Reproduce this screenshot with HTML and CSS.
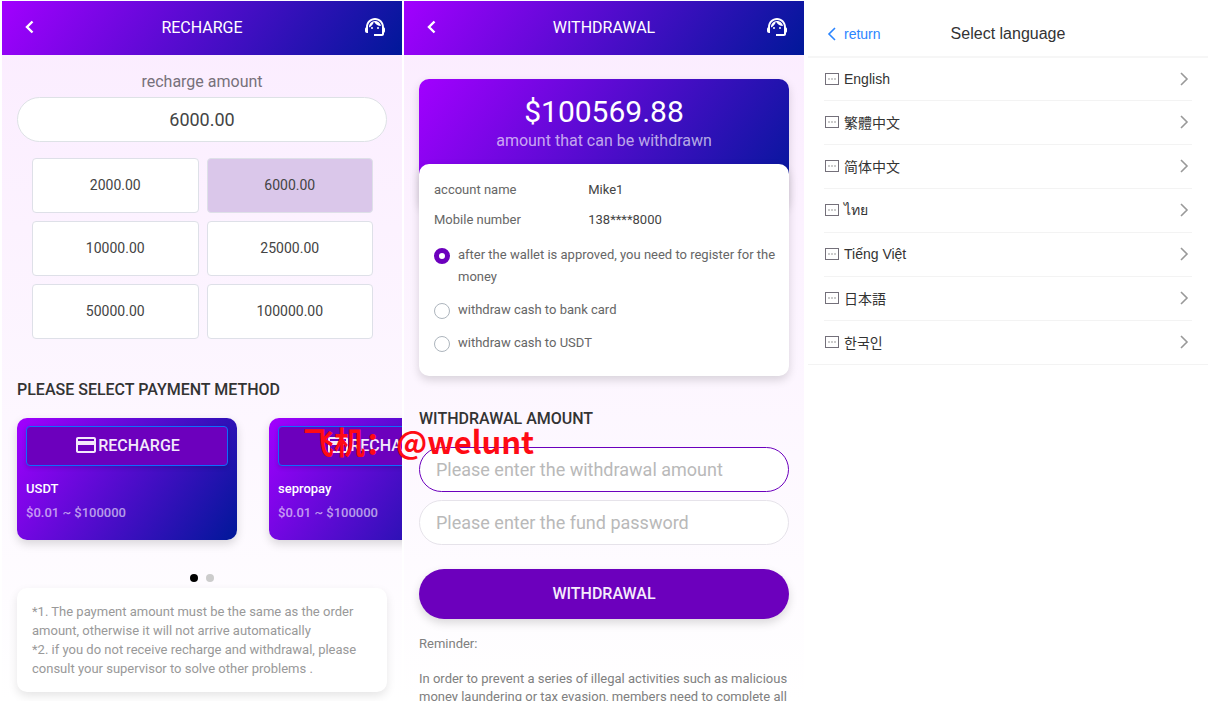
FILE: index.html
```
<!DOCTYPE html>
<html lang="en">
    <head>
        <meta charset="UTF-8">
        <title>Wallet</title>
        <meta name="viewport" content="width=device-width,initial-scale=1.0">
        <link rel="stylesheet" href="styles.css">
    </head>
    <body>
        <svg class="defs" aria-hidden="true">
            <symbol id="back" viewBox="0 0 24 24">
                <path d="M15.500 6.500 10 12l5.500 5.500" fill="none" stroke="currentColor" stroke-width="2.400"/>
            </symbol>
            <symbol id="agent" viewBox="0 0 24 24">
                <path d="M21 12.220C21 6.730 16.740 3 12 3c-4.690 0-9 3.650-9 9.280-.6.340-1 .980-1 1.720v2c0 1.100.900 2 2 2h1v-6.100c0-3.870 3.130-7 7-7s7 3.130 7 7V19h-8v2h8c1.100 0 2-.900 2-2v-1.220c.590-.310 1-.920 1-1.640v-2.300c0-.700-.410-1.310-1-1.620z"/>
                <circle cx="9" cy="13" r="1"/>
                <circle cx="15" cy="13" r="1"/>
                <path d="M18 11.030C17.520 8.180 15.040 6 12.050 6c-3.030 0-6.290 2.510-6.030 6.450 2.470-1.010 4.330-3.210 4.860-5.890 1.310 2.630 4 4.440 7.120 4.470z"/>
            </symbol>
            <symbol id="card" viewBox="0 0 24 24">
                <path d="M20 4H4c-1.110 0-2 .890-2 2v12c0 1.110.890 2 2 2h16c1.110 0 2-.890 2-2V6c0-1.110-.890-2-2-2zm0 14H4v-6h16v6zm0-10H4V6h16v2z"/>
            </symbol>
            <symbol id="lang" viewBox="0 0 16 14">
                <rect x="1.500" y="1.500" width="13" height="11" fill="none" stroke="#74707a"/>
                <path d="M4 7h2M7 7h2M10 7h2" stroke="#999" stroke-width="1.200"/>
            </symbol>
            <symbol id="next" viewBox="0 0 10 14">
                <path d="M2 1l6 6-6 6" fill="none" stroke="currentColor" stroke-width="1.600"/>
            </symbol>
        </svg>

        <section class="panel wallet">
            <header class="bar">
                <button class="icon-btn" aria-label="back"><svg><use href="#back"/></svg></button>
                <h1>RECHARGE</h1>
                <button class="icon-btn" aria-label="service"><svg><use href="#agent"/></svg></button>
            </header>
            <div class="recharge">
                <label class="amount-label" for="amount">recharge amount</label>
                <input class="pill amount" id="amount" type="text" value="6000.00">
                <div class="choices">
                    <button>2000.00</button>
                    <button class="active">6000.00</button>
                    <button>10000.00</button>
                    <button>25000.00</button>
                    <button>50000.00</button>
                    <button>100000.00</button>
                </div>
                <h2>PLEASE SELECT PAYMENT METHOD</h2>
                <div class="methods">
                    <div class="method">
                        <button><svg><use href="#card"/></svg>RECHARGE</button>
                        <p class="name">USDT</p>
                        <p class="range">$0.01 ~ $100000</p>
                    </div>
                    <div class="method">
                        <button><svg><use href="#card"/></svg>RECHARGE</button>
                        <p class="name">sepropay</p>
                        <p class="range">$0.01 ~ $100000</p>
                    </div>
                </div>
                <div class="dots"><span class="on"></span><span></span></div>
                <div class="note">
                    <p>*1. The payment amount must be the same as the order amount, otherwise it will not arrive automatically</p>
                    <p>*2. if you do not receive recharge and withdrawal, please consult your supervisor to solve other problems .</p>
                </div>
            </div>
        </section>

        <section class="panel wallet">
            <header class="bar">
                <button class="icon-btn" aria-label="back"><svg><use href="#back"/></svg></button>
                <h1>WITHDRAWAL</h1>
                <button class="icon-btn" aria-label="service"><svg><use href="#agent"/></svg></button>
            </header>
            <form class="withdraw">
                <div class="balance">
                    <p class="total">$100569.88</p>
                    <p class="caption">amount that can be withdrawn</p>
                </div>
                <div class="account">
                    <dl>
                        <dt>account name</dt><dd>Mike1</dd>
                        <dt>Mobile number</dt><dd>138****8000</dd>
                    </dl>
                    <label class="way"><input type="radio" name="way" checked><span>after the wallet is approved, you need to register for the money</span></label>
                    <label class="way"><input type="radio" name="way"><span>withdraw cash to bank card</span></label>
                    <label class="way"><input type="radio" name="way"><span>withdraw cash to USDT</span></label>
                </div>
                <h2><label for="cash">WITHDRAWAL AMOUNT</label></h2>
                <input class="pill focus" id="cash" type="text" placeholder="Please enter the withdrawal amount">
                <input class="pill" type="password" aria-label="fund password" placeholder="Please enter the fund password">
                <button class="submit" type="button">WITHDRAWAL</button>
                <div class="reminder">
                    <p>Reminder:</p>
                    <p>In order to prevent a series of illegal activities such as malicious money laundering or tax evasion, members need to complete all</p>
                </div>
            </form>
        </section>

        <section class="panel language">
            <header class="lang-bar">
                <a href="#"><svg><use href="#next"/></svg>return</a>
                <h1>Select language</h1>
            </header>
            <ul class="langs">
                <li><a href="#"><svg class="flag"><use href="#lang"/></svg>English<svg class="arrow"><use href="#next"/></svg></a></li>
                <li lang="zh-TW"><a href="#"><svg class="flag"><use href="#lang"/></svg>繁體中文<svg class="arrow"><use href="#next"/></svg></a></li>
                <li lang="zh-CN"><a href="#"><svg class="flag"><use href="#lang"/></svg>简体中文<svg class="arrow"><use href="#next"/></svg></a></li>
                <li lang="th"><a href="#"><svg class="flag"><use href="#lang"/></svg>ไทย<svg class="arrow"><use href="#next"/></svg></a></li>
                <li lang="vi"><a href="#"><svg class="flag"><use href="#lang"/></svg>Tiếng Việt<svg class="arrow"><use href="#next"/></svg></a></li>
                <li lang="ja"><a href="#"><svg class="flag"><use href="#lang"/></svg>日本語<svg class="arrow"><use href="#next"/></svg></a></li>
                <li lang="ko"><a href="#"><svg class="flag"><use href="#lang"/></svg>한국인<svg class="arrow"><use href="#next"/></svg></a></li>
            </ul>
        </section>

        <div class="contact" lang="zh-CN">飞机：@welunt</div>
    </body>
</html>
```
FILE: styles.css
```
*{
    box-sizing: border-box;
}
body{
    display: flex;
    gap: 2px;
    height: 100vh;
    margin: 0;
    padding: 1px 1px 5px 2px;
    background: #fff;
    color: #333;
    font-family: Roboto, "Noto Sans", sans-serif;
    font-size: 13px;
    position: relative;
    overflow: hidden;
}
h1, h2, p, dl, dd, ul{
    margin: 0;
    padding: 0;
    font-weight: 400;
}
button, input{
    font-family: inherit;
}
button{
    cursor: pointer;
}
svg{
    display: block;
    fill: currentColor;
}
.defs{
    display: none;
}
.panel{
    flex: 1 1 0;
    min-width: 0;
    overflow: hidden;
}
.wallet{
    background: linear-gradient(#fbecff, #fdf8ff 65%, #fff);
}
.bar{
    display: flex;
    align-items: center;
    justify-content: space-between;
    height: 54px;
    padding: 0 15px 2px;
    color: #fff;
    background: linear-gradient(125deg, #a200ff, #001899);
}
.bar h1{
    font-size: 16px;
}
.icon-btn{
    padding: 0;
    border: 0;
    background: none;
    color: #fff;
}
.icon-btn svg{
    width: 24px;
    height: 24px;
}
h2{
    font-size: 16px;
    line-height: 24px;
    font-weight: 500;
}
.pill{
    display: block;
    width: 100%;
    height: 45px;
    padding: 0 16px;
    border: 1px solid #e6e3ea;
    border-radius: 24px;
    background: #fff;
    color: #444;
    font-size: 18px;
    outline: 0;
}
.pill::placeholder{
    color: #b9b9b9;
}
.pill.focus{
    border-color: #6c00bd;
}

/* recharge */
.recharge{
    padding: 15px;
}
.amount-label{
    display: block;
    text-align: center;
    font-size: 16px;
    line-height: 24px;
    margin-bottom: 3px;
    color: #77717b;
}
.amount{
    text-align: center;
    border-color: #dee2e6;
}
.choices{
    display: grid;
    grid-template-columns: 1fr 1fr;
    gap: 8px;
    padding: 16px 14px 0 15px;
    margin-bottom: 39px;
}
.choices button{
    height: 55px;
    padding: 0 0 2px;
    border: 1px solid #dee0e8;
    border-radius: 4px;
    background: #fff;
    color: #444;
    font-size: 14px;
}
.choices .active{
    background: #dac7ea;
}
.methods{
    display: flex;
    gap: 32px;
    margin-top: 16px;
}
.method{
    flex: 0 0 220px;
    padding: 8px 9px 16px;
    border-radius: 10px;
    color: #fff;
    background: linear-gradient(125deg, #a200ff, #001899);
    box-shadow: 0 4px 10px rgba(0, 0, 0, 0.15);
}
.method button{
    display: flex;
    align-items: center;
    justify-content: center;
    width: 100%;
    height: 40px;
    padding: 0 0 2px;
    margin-bottom: 12px;
    border: 1px solid #0d6efd;
    border-radius: 4px;
    background: #6c00bd;
    color: #f3e8fb;
    font-size: 16px;
    font-weight: 500;
    box-shadow: 0 2px 4px rgba(0, 0, 0, 0.15);
}
.method svg{
    width: 24px;
    height: 24px;
}
.method p{
    line-height: 22px;
    font-weight: 500;
}
.method .range{
    margin-top: 2px;
    color: rgba(255, 255, 255, 0.6);
}
.dots{
    display: flex;
    justify-content: center;
    gap: 8px;
    padding: 34px 0 6px;
}
.dots span{
    width: 8px;
    height: 8px;
    border-radius: 50%;
    background: #ccc;
}
.dots .on{
    background: #000;
}
.note{
    padding: 14px 15px;
    border-radius: 10px;
    background: #fff;
    color: #999;
    line-height: 19px;
    box-shadow: 0 4px 10px rgba(0, 0, 0, 0.1);
}

/* withdrawal */
.withdraw{
    padding: 24px 15px 0;
}
.balance{
    padding: 15px 0 56px;
    border-radius: 10px;
    text-align: center;
    color: #fff;
    background: linear-gradient(125deg, #a200ff, #001899);
    box-shadow: 0 4px 10px rgba(0, 0, 0, 0.15);
}
.total{
    font-size: 30px;
    line-height: 36px;
}
.caption{
    font-size: 16px;
    line-height: 22px;
    color: rgba(255, 255, 255, 0.65);
}
.account{
    position: relative;
    margin-top: -44px;
    padding: 11px 8px 22px 15px;
    border-radius: 10px;
    background: #fff;
    color: #666;
    box-shadow: 0 4px 10px rgba(0, 0, 0, 0.15);
}
.account dl{
    display: grid;
    grid-template-columns: 4fr 5fr;
    line-height: 30px;
    margin-bottom: 9px;
}
.account dd{
    color: #444;
}
.way{
    display: flex;
    gap: 8px;
    line-height: 22px;
    margin-bottom: 11px;
}
.way:last-child{
    margin-bottom: 0;
}
.way input{
    appearance: none;
    flex: none;
    width: 16px;
    height: 16px;
    margin: 4px 0 0;
    border: 1px solid #adb5bd;
    border-radius: 50%;
    background: #fff;
}
.way input:checked{
    border: 5px solid #6c00bd;
}
.withdraw h2{
    margin: 31px 0 16px;
}
.withdraw .pill{
    margin-bottom: 8px;
}
.submit{
    display: block;
    width: 100%;
    height: 50px;
    padding: 0 0 2px;
    margin-top: 24px;
    border: 0;
    border-radius: 25px;
    background: #6c00bd;
    color: #f5ecfb;
    font-size: 16px;
    font-weight: 500;
    box-shadow: 0 4px 10px rgba(0, 0, 0, 0.15);
}
.reminder{
    margin-top: 16px;
    color: #808080;
    line-height: 18px;
}
.reminder p{
    margin-bottom: 17px;
}

/* language */
.language{
    margin-left: 2px;
    font-family: "Liberation Sans", "Noto Sans CJK SC", sans-serif;
}
.language a{
    color: inherit;
    text-decoration: none;
}
.lang-bar{
    display: grid;
    grid-template-columns: 1fr auto 1fr;
    align-items: center;
    height: 57px;
    padding: 10px 16px 0;
    border-bottom: 2px solid #f6f6f6;
}
.lang-bar h1{
    font-size: 16px;
}
.lang-bar a{
    display: flex;
    align-items: center;
    gap: 7px;
    padding-left: 3px;
    color: #2b85ff;
    font-size: 14px;
}
.lang-bar svg{
    width: 10px;
    height: 14px;
    transform: rotate(180deg);
}
.langs{
    padding: 0 16px;
    list-style: none;
    font-size: 14px;
    border-bottom: 1px solid #f3f3f3;
}
.langs li{
    height: 44px;
    border-bottom: 1px solid #f3f3f3;
}
.langs li:first-child{
    height: 43px;
}
.langs li:last-child{
    height: 43px;
    border: 0;
}
.langs a{
    display: flex;
    align-items: center;
    height: 100%;
    padding-bottom: 1px;
}
.langs .flag{
    width: 16px;
    height: 14px;
    margin-right: 4px;
}
.langs .arrow{
    width: 10px;
    height: 14px;
    margin: 0 3px 0 auto;
    color: #999;
}
.langs [lang="zh-TW"]{
    font-family: "Liberation Sans", "Noto Sans CJK TC", sans-serif;
}
.langs [lang="ja"]{
    font-family: "Liberation Sans", "Noto Sans CJK JP", sans-serif;
}
.langs [lang="ko"]{
    font-family: "Liberation Sans", "Noto Sans CJK KR", sans-serif;
}

/* contact mark lies over the panels */
.contact{
    position: absolute;
    left: 303px;
    top: 419px;
    color: #ff0a14;
    font: 700 31px/44px "Noto Sans CJK SC", sans-serif;
    white-space: nowrap;
    pointer-events: none;
}
```
